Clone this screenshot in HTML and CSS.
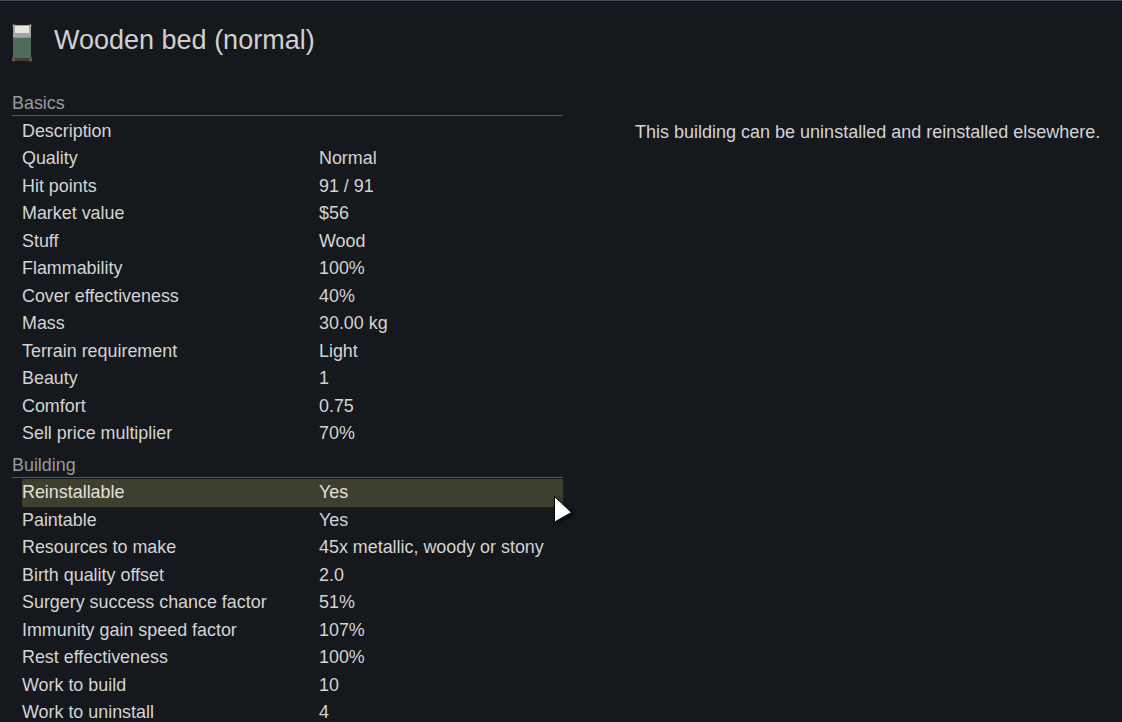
FILE: index.html
```html
<!DOCTYPE html>
<html lang="en">
<head>
<meta charset="utf-8">
<title>Wooden bed (normal)</title>
<link rel="stylesheet" href="styles.css">
</head>
<body>
<div class="page">
  <header class="title">
    <svg class="thing-icon" width="20" height="38" viewBox="0 0 20 38" aria-hidden="true">
      <rect x="0.5" y="0" width="3" height="3" fill="#6b5038"/>
      <rect x="16.5" y="0" width="3" height="3" fill="#6b5038"/>
      <rect x="1" y="1" width="18" height="13" fill="#a3a5a3"/>
      <rect x="3" y="2" width="14" height="7" rx="1" fill="#e6e6e4"/>
      <rect x="1" y="13" width="18" height="1" fill="#8b9a8f"/>
      <rect x="1" y="14" width="18" height="20" fill="#4f6b59"/>
      <rect x="1" y="34" width="18" height="3" fill="#4a3a2a"/>
      <rect x="0" y="33" width="3" height="4.5" fill="#6b5038"/>
      <rect x="17" y="33" width="3" height="4.5" fill="#6b5038"/>
    </svg>
    <h1>Wooden bed (normal)</h1>
  </header>
  <div class="columns">
    <main class="stats">
      <section>
        <h2>Basics</h2>
        <div class="row"><span class="label">Description</span><span class="value"></span></div>
        <div class="row"><span class="label">Quality</span><span class="value">Normal</span></div>
        <div class="row"><span class="label">Hit points</span><span class="value">91 / 91</span></div>
        <div class="row"><span class="label">Market value</span><span class="value">$56</span></div>
        <div class="row"><span class="label">Stuff</span><span class="value">Wood</span></div>
        <div class="row"><span class="label">Flammability</span><span class="value">100%</span></div>
        <div class="row"><span class="label">Cover effectiveness</span><span class="value">40%</span></div>
        <div class="row"><span class="label">Mass</span><span class="value">30.00 kg</span></div>
        <div class="row"><span class="label">Terrain requirement</span><span class="value">Light</span></div>
        <div class="row"><span class="label">Beauty</span><span class="value">1</span></div>
        <div class="row"><span class="label">Comfort</span><span class="value">0.75</span></div>
        <div class="row"><span class="label">Sell price multiplier</span><span class="value">70%</span></div>
      </section>
      <section>
        <h2>Building</h2>
        <div class="row selected"><span class="label">Reinstallable</span><span class="value">Yes</span>
          <svg class="cursor" width="18" height="26" viewBox="0 0 18 26" aria-hidden="true">
            <path d="M0.5 0.5 L17.5 16.5 L1.5 25.5 L0.5 25.5 Z" fill="#fff" stroke="#000" stroke-width="1"/>
          </svg>
        </div>
        <div class="row"><span class="label">Paintable</span><span class="value">Yes</span></div>
        <div class="row"><span class="label">Resources to make</span><span class="value">45x metallic, woody or stony</span></div>
        <div class="row"><span class="label">Birth quality offset</span><span class="value">2.0</span></div>
        <div class="row"><span class="label">Surgery success chance factor</span><span class="value">51%</span></div>
        <div class="row"><span class="label">Immunity gain speed factor</span><span class="value">107%</span></div>
        <div class="row"><span class="label">Rest effectiveness</span><span class="value">100%</span></div>
        <div class="row"><span class="label">Work to build</span><span class="value">10</span></div>
        <div class="row"><span class="label">Work to uninstall</span><span class="value">4</span></div>
      </section>
    </main>
    <aside class="detail">This building can be uninstalled and reinstalled elsewhere.</aside>
  </div>
</div>
</body>
</html>
```

FILE: styles.css
```css
* { box-sizing: border-box; }
html, body { margin: 0; height: 100%; overflow: hidden; }
body {
  background: #15181d;
  color: #d4d4d4;
  font-family: "Liberation Sans", Arial, sans-serif;
  font-size: 17.9px;
}
.page {
  height: 722px;
  overflow: hidden;
  border-top: 1px solid #414c5a;
  padding: 19px 0 0 10px;
}
.title {
  display: flex;
  align-items: center;
  gap: 22px;
  height: 40px;
}
.thing-icon { flex: none; width: 20px; height: 38px; margin: 6px 0 0 2px; }
.title h1 {
  margin: 0;
  font-size: 27px;
  font-weight: 400;
  color: #d0d0d0;
}
.columns {
  display: flex;
  padding-top: 31px;
}
.stats { width: 553px; flex: none; padding-left: 2px; }
.stats h2 {
  margin: 0 0 1.5px;
  height: 25px;
  line-height: 24px;
  font-size: 17.9px;
  font-weight: 400;
  color: #9a9a9a;
  border-bottom: 1px solid #55585c;
}
.stats section + section { margin-top: 5px; }
.row {
  position: relative;
  display: flex;
  height: 27.5px;
  line-height: 27.5px;
  margin-left: 10px;
  white-space: nowrap;
}
.label { width: 297px; flex: none; }
.selected { background: #3f3f30; color: #e2e2d8; }
.cursor {
  position: absolute;
  right: -9px;
  top: 17px;
  overflow: visible;
  filter: drop-shadow(2px 2px 2px rgba(0, 0, 0, .6));
}
.detail {
  margin-left: 72px;
  padding-top: 31px;
  white-space: nowrap;
  line-height: 20px;
  font-size: 18px;
}
```
